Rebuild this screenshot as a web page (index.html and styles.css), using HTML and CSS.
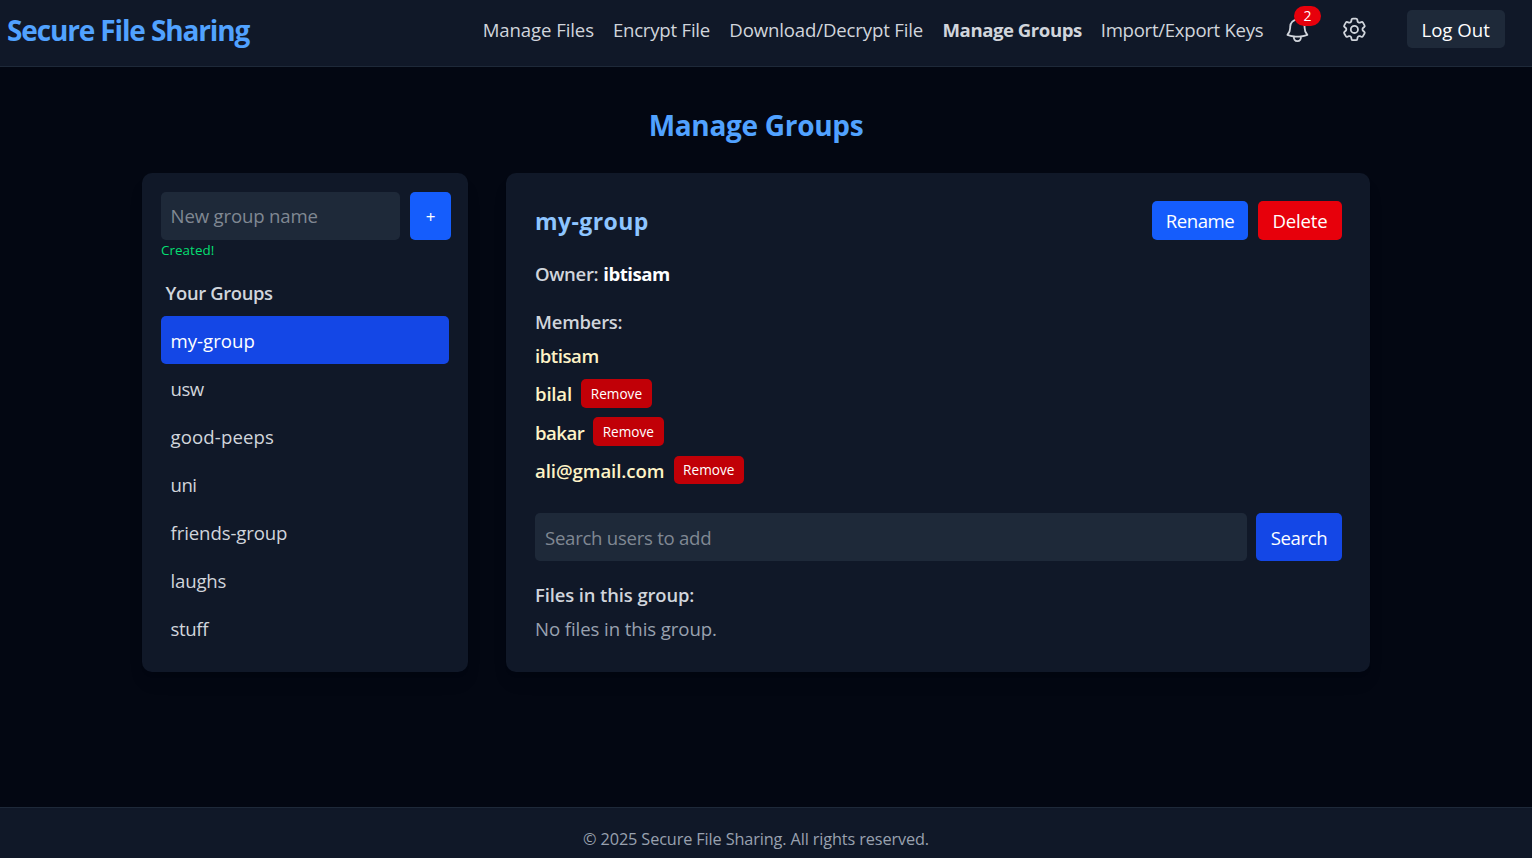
FILE: index.html
```html
<!DOCTYPE html>
<html lang="en">
<head>
<meta charset="utf-8">
<title>Manage Groups</title>
<link rel="stylesheet" href="styles.css">
</head>
<body>
<header class="topbar">
  <a class="brand"><span>Secure File Sharing</span></a>
  <nav class="nav">
    <a class="nav-link nav-files"><span>Manage Files</span></a>
    <a class="nav-link nav-encrypt"><span>Encrypt File</span></a>
    <a class="nav-link nav-download"><span>Download/Decrypt File</span></a>
    <a class="nav-link nav-groups"><span>Manage Groups</span></a>
    <a class="nav-link nav-keys"><span>Import/Export Keys</span></a>
  </nav>
  <div class="bell">
    <svg class="icon" viewBox="0 0 24 24"><path d="M14.857 17.082a23.848 23.848 0 0 0 5.454-1.31A8.967 8.967 0 0 1 18 9.75V9A6 6 0 0 0 6 9v.75a8.967 8.967 0 0 1-2.312 6.022c1.733.64 3.56 1.085 5.455 1.31m5.714 0a24.255 24.255 0 0 1-5.714 0m5.714 0a3 3 0 1 1-5.714 0"/></svg>
    <span class="badge">2</span>
  </div>
  <div class="gear">
    <svg class="icon" viewBox="0 0 24 24"><path d="M9.594 3.94c.09-.542.56-.94 1.11-.94h2.593c.55 0 1.02.398 1.11.94l.213 1.281c.063.374.313.686.645.87.074.04.147.083.22.127.325.196.72.257 1.075.124l1.217-.456a1.125 1.125 0 0 1 1.37.49l1.296 2.247a1.125 1.125 0 0 1-.26 1.431l-1.003.827c-.293.241-.438.613-.43.992a7.723 7.723 0 0 1 0 .255c-.008.378.137.75.43.991l1.004.827c.424.35.534.955.26 1.43l-1.298 2.247a1.125 1.125 0 0 1-1.369.491l-1.217-.456c-.355-.133-.75-.072-1.076.124a6.47 6.47 0 0 1-.22.128c-.331.183-.581.495-.644.869l-.213 1.281c-.09.543-.56.94-1.11.94h-2.594c-.55 0-1.019-.398-1.11-.94l-.213-1.281c-.062-.374-.312-.686-.644-.87a6.52 6.52 0 0 1-.22-.127c-.325-.196-.72-.257-1.076-.124l-1.217.456a1.125 1.125 0 0 1-1.369-.49l-1.297-2.247a1.125 1.125 0 0 1 .26-1.431l1.004-.827c.292-.24.437-.613.43-.991a6.932 6.932 0 0 1 0-.255c.007-.38-.138-.751-.43-.992l-1.004-.827a1.125 1.125 0 0 1-.26-1.43l1.297-2.247a1.125 1.125 0 0 1 1.37-.491l1.216.456c.356.133.751.072 1.076-.124.072-.044.146-.086.22-.128.332-.183.582-.495.644-.869l.214-1.28Z"/><path d="M15 12a3 3 0 1 1-6 0 3 3 0 0 1 6 0Z"/></svg>
  </div>
  <button class="logout"><span>Log Out</span></button>
</header>

<main class="page">
  <h1 class="title"><span>Manage Groups</span></h1>
  <div class="columns">
    <aside class="panel sidebar">
      <div class="create-row">
        <div class="field create-field"><span>New group name</span></div>
        <button class="btn add"><span>+</span></button>
      </div>
      <p class="created"><span>Created!</span></p>
      <h2 class="side-title"><span>Your Groups</span></h2>
      <ul class="groups">
        <li class="group active"><span>my-group</span></li>
        <li class="group g-usw"><span>usw</span></li>
        <li class="group g-peeps"><span>good-peeps</span></li>
        <li class="group g-uni"><span>uni</span></li>
        <li class="group g-friends"><span>friends-group</span></li>
        <li class="group g-laughs"><span>laughs</span></li>
        <li class="group g-stuff"><span>stuff</span></li>
      </ul>
    </aside>
    <section class="panel detail">
      <div class="detail-head">
        <h2 class="group-name"><span>my-group</span></h2>
        <div class="actions">
          <button class="btn rename"><span>Rename</span></button>
          <button class="btn delete"><span>Delete</span></button>
        </div>
      </div>
      <p class="owner"><span class="owner-label">Owner:</span><span class="owner-name">ibtisam</span></p>
      <h3 class="label members-label"><span>Members:</span></h3>
      <ul class="members">
        <li class="member m-first"><span class="member-name">ibtisam</span></li>
        <li class="member m-bilal"><span class="member-name">bilal</span><button class="btn remove"><span>Remove</span></button></li>
        <li class="member m-bakar"><span class="member-name">bakar</span><button class="btn remove"><span>Remove</span></button></li>
        <li class="member m-ali"><span class="member-name">ali@gmail.com</span><button class="btn remove"><span>Remove</span></button></li>
      </ul>
      <div class="search-row">
        <div class="field search-field"><span>Search users to add</span></div>
        <button class="btn search"><span>Search</span></button>
      </div>
      <h3 class="label files-label"><span>Files in this group:</span></h3>
      <p class="empty"><span>No files in this group.</span></p>
    </section>
  </div>
</main>

<footer class="footer"><span>© 2025 Secure File Sharing. All rights reserved.</span></footer>
</body>
</html>
```
FILE: styles.css
```css
* { box-sizing: border-box; margin: 0; padding: 0; }
body {
  height: 858px;
  display: flex;
  flex-direction: column;
  overflow: hidden;
  background: #030712;
  color: #d1d5dc;
  font: 18.6px/28.8px "Open Sans", "Noto Sans", sans-serif;
}
span { white-space: nowrap; }
ul { list-style: none; }
button { border: 0; color: #fff; font: inherit; }

.topbar {
  display: flex;
  align-items: flex-start;
  height: 67px;
  background: #101828;
  border-bottom: 1px solid #1e2939;
}
.brand {
  width: 476px;
  padding: 13px 0 0 7px;
  color: #51a2ff;
  font-size: 28px;
  font-weight: 700;
  letter-spacing: -1.14px;
  line-height: 34px;
}
.nav { display: flex; gap: 19.2px; padding: 16px 0 0 6.7px; }
.nav-files { width: 111px; letter-spacing: -.1px; }
.nav-encrypt { width: 97.3px; letter-spacing: -.22px; }
.nav-download { width: 194px; letter-spacing: -.15px; }
.nav-groups { width: 139px; font-weight: 700; letter-spacing: -.46px; }
.nav-keys { width: 163.3px; letter-spacing: -.28px; }
.icon {
  display: block;
  width: 28.8px;
  height: 28.8px;
  fill: none;
  stroke: #d1d5dc;
  stroke-width: 1.5;
  stroke-linecap: round;
  stroke-linejoin: round;
}
.bell { position: relative; margin: 16px 0 0 19px; }
.badge {
  position: absolute;
  left: 11px;
  top: -10px;
  width: 27px;
  height: 20px;
  border-radius: 10px;
  background: #e7000b;
  color: #fff;
  font-size: 14px;
  line-height: 20px;
  text-align: center;
}
.gear { margin: 15px 0 0 28px; }
.logout {
  width: 98px;
  height: 38px;
  margin: 10px 0 0 38px;
  border-radius: 5px;
  background: #1e2939;
  line-height: 40px;
}

.page { flex: 1; padding-top: 37px; }
.title {
  width: 1512px;
  color: #51a2ff;
  font-size: 28px;
  font-weight: 700;
  letter-spacing: -.3px;
  line-height: 43px;
  text-align: center;
}
.columns { display: flex; gap: 38px; margin: 26px 0 0 142px; }
.panel {
  height: 499px;
  border-radius: 10px;
  background: #101828;
  box-shadow: 0 12px 18px -4px rgba(0, 0, 0, .1), 0 5px 7px -5px rgba(0, 0, 0, .1);
}
.sidebar { width: 326px; padding: 19px 17px 0 19px; }
.create-row { display: flex; gap: 10px; }
.field {
  height: 48px;
  padding-left: 10px;
  border-radius: 5px;
  background: #1e2939;
  color: #808893;
  line-height: 49px;
}
.create-field { width: 239px; padding-left: 9.6px; letter-spacing: -.17px; line-height: 47px; }
.btn { border-radius: 5px; text-align: center; }
.add { width: 41px; height: 48px; background: #155dfc; line-height: 49px; font-size: 17px; }
.created { color: #05df72; font-size: 13.4px; letter-spacing: .06px; line-height: 20px; }
.side-title {
  margin-top: 18px;
  padding-left: 4.5px;
  font-size: 18.4px;
  font-weight: 600;
  letter-spacing: -.36px;
  line-height: 29px;
}
.groups { margin-top: 9px; }
.group { width: 288px; height: 48px; padding-left: 9.6px; border-radius: 5px; line-height: 50px; }
.active { background: #1447e6; color: #fff; }
.g-usw { letter-spacing: -.6px; }
.g-peeps { letter-spacing: .1px; }
.g-uni { letter-spacing: -.6px; }
.g-friends { letter-spacing: -.12px; }
.g-laughs { letter-spacing: -.2px; }
.g-stuff { letter-spacing: -.4px; }

.detail { width: 864px; padding: 28px 28px 0 29px; }
.detail-head { display: flex; justify-content: space-between; height: 39px; }
.group-name { color: #8ec5ff; font-size: 23px; font-weight: 700; letter-spacing: .4px; line-height: 41px; }
.actions { display: flex; gap: 10px; }
.rename { width: 96px; background: #155dfc; letter-spacing: -.5px; line-height: 40px; }
.delete { width: 84px; background: #e7000b; letter-spacing: -.15px; line-height: 40px; }
.owner { display: flex; gap: 5px; margin-top: 20px; font-weight: 600; }
.owner-label { letter-spacing: -.35px; }
.owner-name { color: #fff; font-weight: 700; letter-spacing: -.5px; }
.label { font-size: 18.4px; font-weight: 600; letter-spacing: -.1px; }
.members-label { margin-top: 19px; letter-spacing: -.2px; }
.members { margin-top: 5px; color: #fef3c6; font-weight: 600; letter-spacing: -.45px; }
.member { display: flex; gap: 9px; height: 29px; margin-bottom: 9px; }
.m-first { margin-bottom: 8px; }
.m-bilal .member-name { letter-spacing: -.2px; line-height: 30px; }
.m-bakar { gap: 8.5px; margin-bottom: 10px; }
.m-bakar .member-name { letter-spacing: -.5px; line-height: 31px; }
.m-ali { gap: 9.3px; }
.m-ali .member-name { letter-spacing: -.08px; line-height: 30px; }
.remove {
  width: 71px;
  height: 29px;
  background: #c10007;
  font-size: 13.6px;
  font-weight: 400;
  letter-spacing: 0;
  line-height: 29px;
}
.m-ali .remove { width: 70px; height: 28px; line-height: 28px; }
.search-row { display: flex; gap: 9px; margin-top: 28px; }
.search-field { width: 712px; letter-spacing: -.27px; }
.search { width: 86px; height: 48px; background: #1447e6; letter-spacing: -.4px; line-height: 50px; }
.files-label { margin-top: 20px; }
.empty { margin-top: 5.5px; color: #99a1af; letter-spacing: -.08px; }

.footer {
  width: 100%;
  height: 51px;
  padding: 17px 20px 0 0;
  border-top: 1px solid #1e2939;
  background: #101828;
  color: #99a1af;
  font-size: 16.3px;
  letter-spacing: -.13px;
  text-align: center;
}
```
